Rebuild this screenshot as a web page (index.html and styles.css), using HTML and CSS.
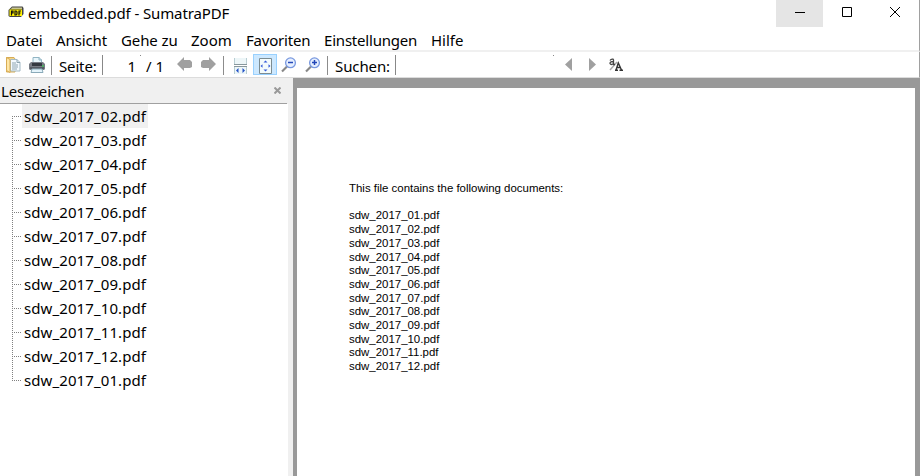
FILE: index.html
```
<!DOCTYPE html>
<html lang="de">
<head>
<meta charset="utf-8">
<title>embedded.pdf - SumatraPDF</title>
<link rel="stylesheet" href="styles.css">
</head>
<body>
<div class="window">
  <header class="titlebar">
    <svg class="appicon" width="16" height="13" viewBox="0 0 16 13"><path d="M4 .5h10.500L15.500 2v6L13 11H2L.5 10V4z" fill="#444"/><path d="M4 1.500h10v1.500H3z" fill="#c8c590"/><path d="M1.500 3.500H14V10H1.500z" fill="#fff000"/><path d="M3.500 9.500V5h1.500v2H3.500M7 5v4h1q1 0 1-2t-1-2zM11 9.500V5h2M11 7h1.500" fill="none" stroke="#111" stroke-width="1.200"/></svg>
    <span class="title">embedded.pdf - SumatraPDF</span>
    <div class="controls">
      <span class="ctl hover"><svg width="10" height="10"><path d="M0 5.500h10" stroke="#000"/></svg></span>
      <span class="ctl"><svg width="10" height="10"><path d="M.5.500h9v9h-9z" fill="none" stroke="#000"/></svg></span>
      <span class="ctl"><svg width="10" height="10"><path d="M0 0l10 10M10 0L0 10" stroke="#000"/></svg></span>
    </div>
  </header>
  <nav class="menu">
    <span class="m1">Datei</span><span class="m2">Ansicht</span><span class="m3">Gehe zu</span><span class="m4">Zoom</span><span class="m5">Favoriten</span><span class="m6">Einstellungen</span><span class="m7">Hilfe</span>
  </nav>
  <div class="toolbar">
    <svg class="open" width="15" height="16" viewBox="0 0 15 16"><path d="M.5.500H8L9 2v13H.5z" fill="#f3d58a" stroke="#d8ac55"/><path d="M4.500 2.500h6.500l3 3v8.500H4.500z" fill="#f4faff" stroke="#a3bac5"/><path d="M11 2.500v3h3M6 6h4M6 8h6M6 10h6M6 12h5" fill="none" stroke="#8ea5b1"/><path d="M.5.500l3.500 2V15.500l-3.500-2z" fill="#ffe7a6" stroke="#d8ac55"/></svg>
    <svg class="print" width="16" height="16" viewBox="0 0 16 16"><path d="M4 6V.5h6L12.500 3v3" fill="#e8f6fc" stroke="#91b4c3"/><path d="M10 0v3h3" fill="none" stroke="#91b4c3"/><path d="M2 5h12l2 2v5l-1 1H1l-1-1V7z" fill="#777b84"/><path d="M3 6h10v3H3z" fill="#343941"/><path d="M1 10h14v2H1z" fill="#555b64"/><path d="M13 9h2" stroke="#26dd42"/><path d="M3 12h10l1 3.500H2z" fill="#e5f4fb" stroke="#8aaab9"/></svg>
    <i class="sep s1"></i><span class="page-label">Seite:</span>
    <span class="field page-field">1</span><span class="total">/ 1</span>
    <svg class="prev" width="16" height="15" viewBox="0 0 16 15"><path d="M0 7L7 0v3h6l2 2v5l-2 1H7v3z" fill="#a0a0a0"/></svg>
    <svg class="next" width="16" height="15" viewBox="0 0 16 15"><path d="M15 7L8 0v3H2L0 5v5l2 1h6v3z" fill="#a0a0a0"/></svg>
    <i class="sep s2"></i>
    <svg class="fitw" width="13" height="16" viewBox="0 0 13 16"><path d="M.5 0v6.500h12V0M.5 16V8.500h12V16" fill="#edf6f8"/><path d="M.5 0v6.500M12.500 0v6.500M.5 8.500V16M12.500 8.500V16" stroke="#b9ced3"/><path d="M0 6.500h13M0 8.500h13" stroke="#87979c"/><path d="M4.500 10v5L2 12.500zM8.500 10v5l2.500-2.500z" fill="#2351c7"/></svg>
    <span class="fit"><svg width="13" height="16" viewBox="0 0 13 16"><path d="M.5.500h12v15H.5z" fill="#f3fbfc" stroke="#7c8c92"/><path d="M6.500 2.500l2 2h-4zM6.500 13.500l2-2h-4zM1.500 8l2-1.800v3.600zM11.500 8l-2-1.800v3.600z" fill="#3159d8"/></svg></span>
    <svg class="zoomout" width="16" height="16" viewBox="0 0 16 16"><path d="M1 14.500L6 9.500" stroke="#888" stroke-width="2.200"/><circle cx="9.500" cy="5.800" r="4.900" fill="#e6efff" stroke="#7898df" stroke-width="1.300"/><path d="M7 5.500h5" stroke="#2448b8" stroke-width="1.500"/></svg>
    <svg class="zoomin" width="16" height="16" viewBox="0 0 16 16"><path d="M1 14.500L6 9.500" stroke="#888" stroke-width="2.200"/><circle cx="9.500" cy="5.800" r="4.900" fill="#e6efff" stroke="#7898df" stroke-width="1.300"/><path d="M7 5.500h5M9.500 3v5" stroke="#2448b8" stroke-width="1.500"/></svg>
    <i class="sep s3"></i><span class="search-label">Suchen:</span><span class="field search-field"></span>
    <svg class="fprev" width="7" height="13"><path d="M7 0v13L0 6.500z" fill="#a0a0a0"/></svg>
    <svg class="fnext" width="7" height="13"><path d="M0 0v13l7-6.500z" fill="#a0a0a0"/></svg>
    <svg class="case" width="15" height="14" viewBox="0 0 15 14"><path d="M1 12L8 4" stroke="#aaa" stroke-width="1.500"/><path d="M1 2.500Q2 .8 4 1.200L4.500 2v4.500H6M4 3.500Q1 3.500 1 5.500Q2 7.500 4.500 5.500" fill="none" stroke="#444" stroke-width="1.300"/><path d="M6 12.300h3M10.500 12.300H14M7 12L9.300 5l3.200 7M8 9.500h3.500" fill="none" stroke="#333" stroke-width="1.400"/></svg>
  </div>
  <main class="content">
    <aside class="sidebar">
      <div class="side-head"><span class="side-title">Lesezeichen</span><svg width="7" height="7"><path d="M.5.500l6 6m0-6l-6 6" stroke="#999" stroke-width="2"/></svg></div>
      <ul class="tree">
        <li class="selected"><span>sdw_2017_02.pdf</span></li>
        <li><span>sdw_2017_03.pdf</span></li>
        <li><span>sdw_2017_04.pdf</span></li>
        <li><span>sdw_2017_05.pdf</span></li>
        <li><span>sdw_2017_06.pdf</span></li>
        <li><span>sdw_2017_07.pdf</span></li>
        <li><span>sdw_2017_08.pdf</span></li>
        <li><span>sdw_2017_09.pdf</span></li>
        <li><span>sdw_2017_10.pdf</span></li>
        <li><span>sdw_2017_11.pdf</span></li>
        <li><span>sdw_2017_12.pdf</span></li>
        <li><span>sdw_2017_01.pdf</span></li>
      </ul>
    </aside>
    <section class="canvas">
      <article class="page">
        <p>This file contains the following documents:</p>
        <ul>
          <li>sdw_2017_01.pdf</li><li>sdw_2017_02.pdf</li><li>sdw_2017_03.pdf</li><li>sdw_2017_04.pdf</li><li>sdw_2017_05.pdf</li><li>sdw_2017_06.pdf</li><li>sdw_2017_07.pdf</li><li>sdw_2017_08.pdf</li><li>sdw_2017_09.pdf</li><li>sdw_2017_10.pdf</li><li>sdw_2017_11.pdf</li><li>sdw_2017_12.pdf</li>
        </ul>
      </article>
    </section>
  </main>
</div>
</body>
</html>
```
FILE: styles.css
```
* { box-sizing: border-box; }
body { margin: 0; background: #fff; color: #000; font: 15px/24px "Noto Sans", "Open Sans", sans-serif; overflow: hidden; }
ul { list-style: none; margin: 0; padding: 0; }
svg { display: block; flex: none; }
span { white-space: nowrap; }
.window { width: 920px; height: 476px; display: flex; flex-direction: column; overflow: hidden; }
.titlebar { height: 27px; display: flex; padding-left: 8px; border-right: 1px solid #a0a0a0; }
.appicon { margin-top: 6px; }
.title { margin-left: 4px; width: 204px; line-height: 26px; letter-spacing: -.11px; }
.controls { display: flex; margin-left: auto; }
.ctl { width: 48px; height: 27px; display: flex; align-items: flex-start; justify-content: center; padding-top: 7px; }
.hover { width: 47px; background: #e5e5e5; }
.menu { height: 25px; display: flex; border-bottom: 2px solid #f0f0f0; border-right: 1px solid #a0a0a0; padding-left: 6px; line-height: 27px; }
.m1 { width: 50px; letter-spacing: -.1px; } .m2 { width: 65px; letter-spacing: -.1px; } .m3 { width: 70px; letter-spacing: -.1px; } .m4 { width: 55px; } .m5 { width: 78px; letter-spacing: -.2px; } .m6 { width: 107px; letter-spacing: -.2px; }
.toolbar { height: 26px; display: flex; border-bottom: 1px solid #dcdcdc; border-right: 1px solid #a0a0a0; padding-left: 6px; line-height: 29px; }
.toolbar > svg { margin-top: 5px; }
.toolbar .print { margin-left: 8px; }
.sep { width: 1px; height: 19px; margin-top: 4px; background: #8c8c8c; flex: none; }
.s1 { margin-left: 6px; }
.page-label { width: 43px; margin-left: 7px; letter-spacing: -.15px; }
.field { position: relative; height: 20px; margin-top: 3px; border-left: 1px solid #888; }
.field::after { content: ""; position: absolute; right: 0; top: 0; width: 1px; height: 1px; background: #888; }
.page-field { width: 39px; padding-right: 5px; text-align: right; line-height: 23px; }
.total { width: 26px; margin-left: 5px; }
.toolbar .prev { margin-left: 5px; }
.toolbar .next { margin-left: 8px; }
.s2 { margin-left: 6px; }
.toolbar .fitw { margin-left: 10px; margin-top: 6px; }
.fit { width: 24px; height: 21px; margin: 2px 0 0 6px; display: flex; align-items: center; justify-content: center; border: 1px solid #99d1ff; background: #cce8ff; }
.fit svg { margin-top: 2px; }
.toolbar .zoomout { margin-left: 4px; }
.toolbar .zoomin { margin-left: 8px; }
.s3 { margin-left: 6px; }
.search-label { width: 60px; margin-left: 7px; letter-spacing: -.1px; }
.search-field { width: 159px; }
.toolbar .fprev { margin: 6px 0 0 11px; }
.toolbar .fnext { margin: 6px 0 0 17px; }
.toolbar .case { margin: 6px 0 0 13px; }
.content { flex: 1; min-height: 0; display: flex; }
.sidebar { width: 293px; padding-right: 5px; background: #f0f0f0; display: flex; flex-direction: column; }
.side-head { height: 26px; display: flex; justify-content: space-between; margin-right: 1px; padding: 0 6px 0 1px; border-bottom: 1px solid #a0a0a0; line-height: 27px; }
.side-title { letter-spacing: -.2px; }
.side-head svg { margin-top: 9px; }
.tree { flex: 1; background: #fff; padding-left: 12px; }
.tree li { height: 24px; display: flex; padding-left: 10px; position: relative; }
.tree li::before { content: ""; position: absolute; left: 0; top: 0; height: 24px; width: 1px; background: repeating-linear-gradient(#808080 0 1px, transparent 1px 2px); }
.tree li::after { content: ""; position: absolute; left: 0; top: 12px; height: 1px; width: 9px; background: repeating-linear-gradient(90deg, #808080 0 1px, transparent 1px 2px); }
.tree li:first-child::before { top: 12px; height: 12px; }
.tree li:last-child::before { height: 12px; }
.tree span { width: 126px; padding-left: 2px; line-height: 25px; letter-spacing: .1px; }
.selected span { background: #f0f0f0; }
.canvas { flex: 1; background: #999; padding: 10px 5px 0 4px; }
.page { height: 100%; background: #fff; padding: 94px 0 0 52px; font: 11.44px/13.7px "Liberation Sans", sans-serif; }
.page p { margin: 0 0 13.7px; }
```
